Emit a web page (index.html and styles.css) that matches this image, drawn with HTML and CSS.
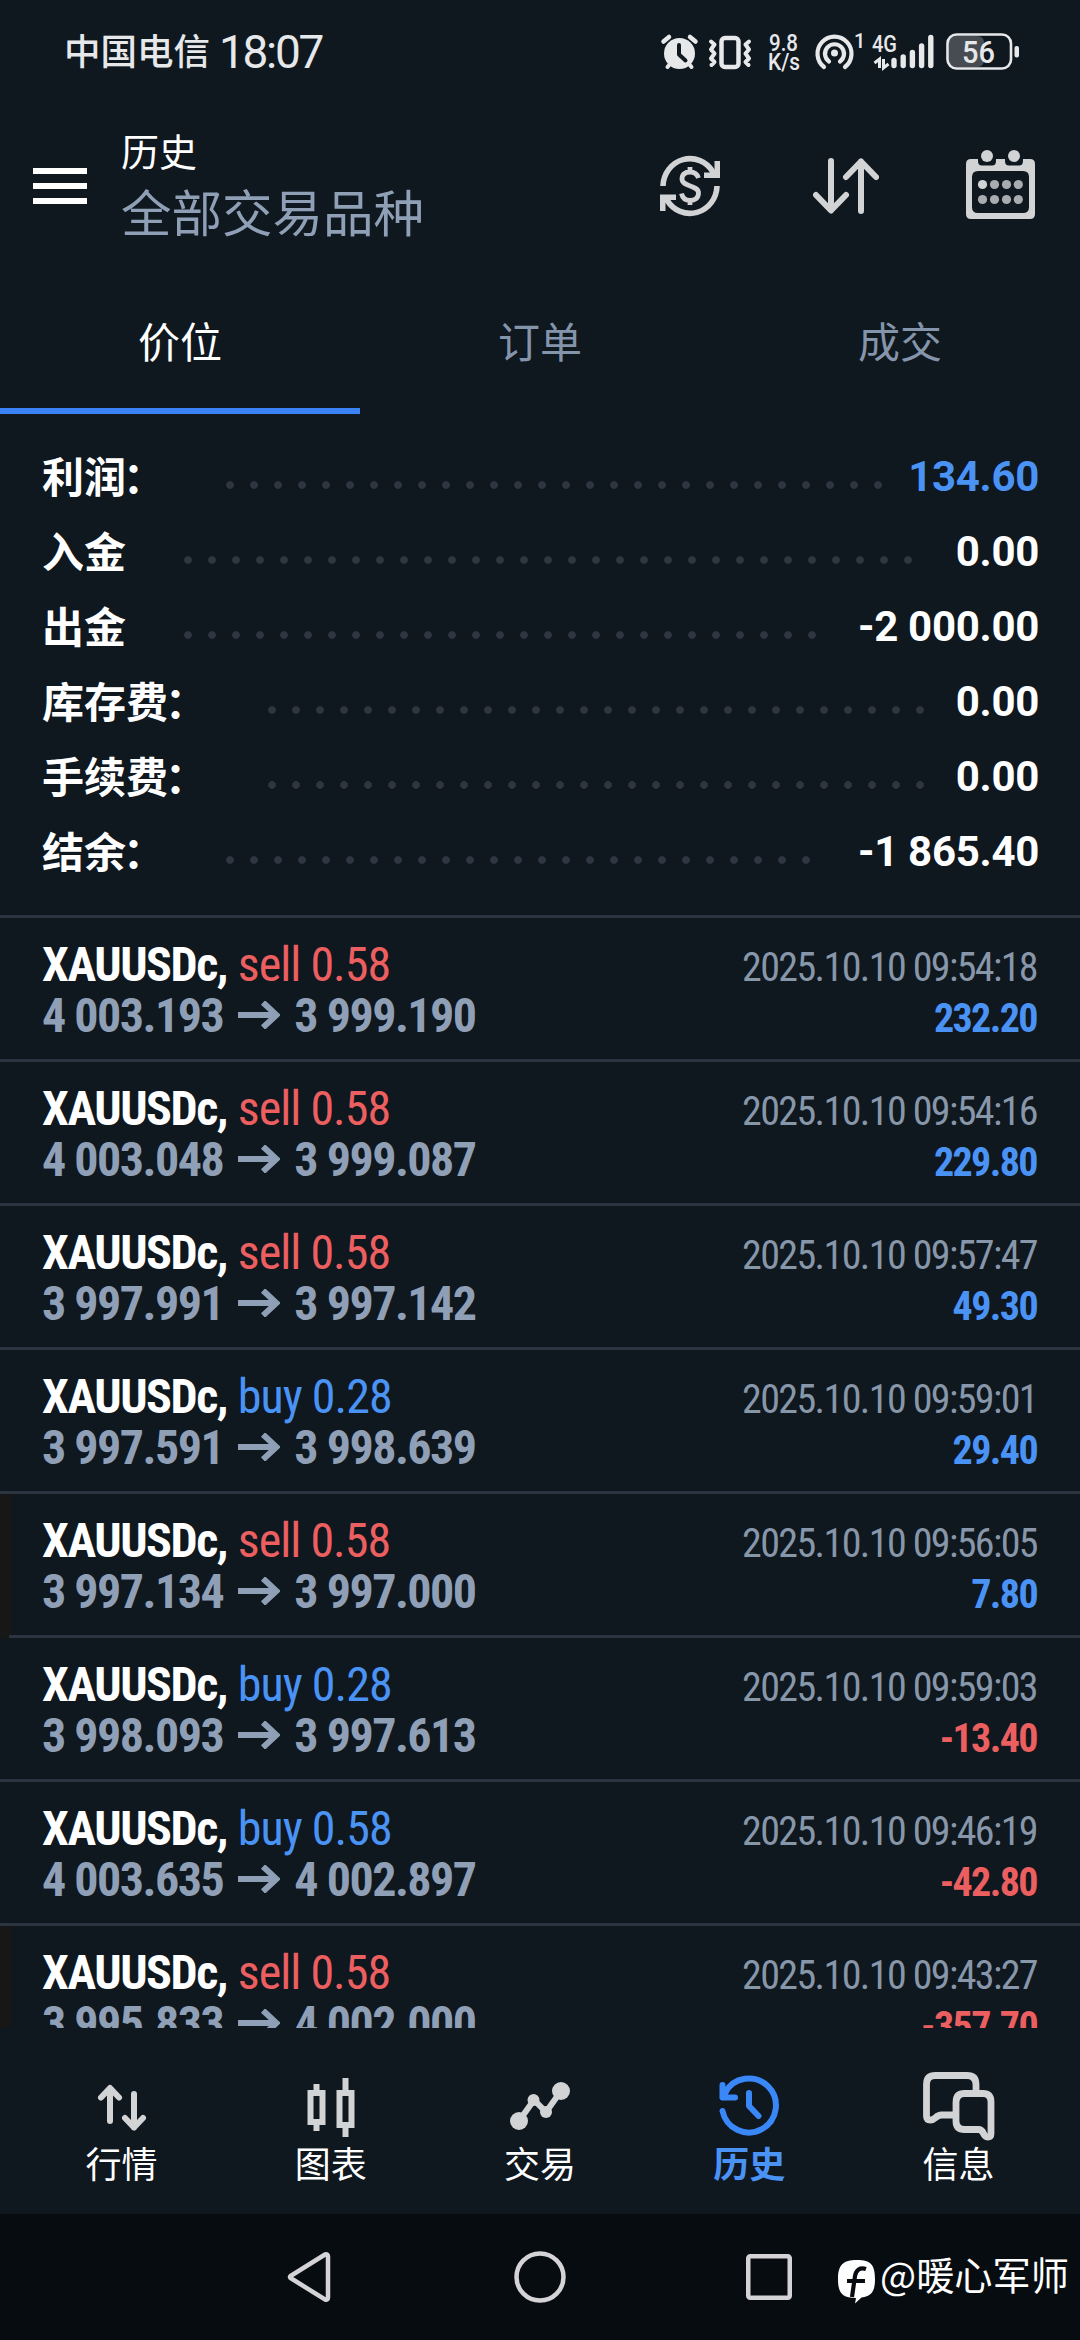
FILE: index.html
```html
<!DOCTYPE html>
<html lang="zh-CN">
<head>
<meta charset="utf-8">
<title>历史</title>
<link rel="stylesheet" href="styles.css">
</head>
<body>
<div class="screen">
  <div class="statusbar">
    <span class="carrier">中国电信</span>
    <span class="clock">18:07</span>
    <svg class="status-icons" viewBox="0 0 362 40" width="362" height="40">
      <g fill="#e6e8ea" stroke="none">
        <circle cx="18.5" cy="22.500" r="15.500"/>
        <path d="M2.500 10.500 8 6M34.500 10.500 29 6" stroke="#e6e8ea" stroke-width="4.500" stroke-linecap="round"/>
        <path d="M9 33 6.500 36M28 33 30.500 36" stroke="#e6e8ea" stroke-width="4" stroke-linecap="round"/>
        <path d="M18 14v9.500l6.500 6" fill="none" stroke="#101820" stroke-width="4" stroke-linecap="round" stroke-linejoin="round"/>
      </g>
      <rect x="60.500" y="7" width="17" height="29" rx="3.500" fill="none" stroke="#e6e8ea" stroke-width="4.500"/>
      <path d="M50 10.500l3.500 3-3.500 5 3.500 4-3.500 5 3.500 3.500-3 3M88 10.500l-3.500 3 3.500 5-3.500 4 3.500 5-3.500 3.500 3 3" fill="none" stroke="#e6e8ea" stroke-width="4" stroke-linecap="round" stroke-linejoin="round"/>
      <text class="net" x="108" y="20" textLength="29" lengthAdjust="spacingAndGlyphs">9.8</text>
      <text class="net" x="107" y="38.500" textLength="32" lengthAdjust="spacingAndGlyphs">K/s</text>
      <g fill="none" stroke="#e6e8ea" stroke-width="4.200" stroke-linecap="round">
        <circle cx="173.500" cy="22" r="3.500" fill="#e6e8ea" stroke="none"/>
        <path d="M168 30.500a9.500 9.500 0 1 1 11 0"/>
        <path d="M163 36a17 17 0 1 1 21 0"/>
      </g>
      <text class="sup" x="193" y="17">1</text>
      <text class="net" x="211" y="21" textLength="25" lengthAdjust="spacingAndGlyphs">4G</text>
      <path d="M218.500 37V28l-5 4M222.500 28v9l5-4" fill="none" stroke="#e6e8ea" stroke-width="3"/>
      <path d="M233 29.500v5M242.200 26v8.500M251.400 21.500v13M260.600 15v19.500M269.800 6.500v28" stroke="#e6e8ea" stroke-width="5.400" stroke-linecap="round"/>
      <rect x="288" y="5" width="35" height="31" rx="6" fill="#474c52"/>
      <rect x="286.500" y="3.500" width="63.500" height="34" rx="9" fill="none" stroke="#e6e8ea" stroke-width="2.600"/>
      <rect x="353.500" y="15" width="4.500" height="11.500" rx="2" fill="#e6e8ea"/>
      <text class="batt" x="301" y="31.500" textLength="33" lengthAdjust="spacingAndGlyphs">56</text>
    </svg>
  </div>

  <header class="header">
    <div class="menu"><i></i><i></i><i></i></div>
    <div class="titles">
      <div class="title">历史</div>
      <div class="subtitle">全部交易品种</div>
    </div>
    <div class="actions">
      <svg width="60" height="62" viewBox="0 0 60 62">
        <path d="M3 31A27 28 0 0 1 53 17M57 31A27 28 0 0 1 7 45" fill="none" stroke="#d2d3d4" stroke-width="5.600"/>
        <path d="M54.500 6H60v17H44v-5.500h6L54.500 15zM5.500 56H0V39.500h16V45h-6L5.500 48z" fill="#d2d3d4"/>
        <path d="M38.500 23Q36.500 17 30 17q-8 0-8 7c0 8 16.500 6 16.500 14 0 5-3.500 7.500-8.500 7.500q-7 0-8.500-7M30 12v5M30 45v5" fill="none" stroke="#d2d3d4" stroke-width="4.800"/>
      </svg>
      <svg width="66" height="56" viewBox="0 0 66 56">
        <path d="M18 3v49M3 37l15 15.500L33 37M48 53V3.500M33 19 48 3.500 63 19" fill="none" stroke="#d2d3d4" stroke-width="6" stroke-linecap="round" stroke-linejoin="round"/>
      </svg>
      <svg class="calendar" width="70" height="70" viewBox="0 0 70 70">
        <path fill-rule="evenodd" fill="#d2d3d4" d="M5 9h7v2q0 4.500 4 4.500h10q4 0 4-4.500V9h9v2q0 4.500 4 4.500h10q4 0 4-4.500V9h7q5 0 5 5v50q0 5-5 5H5q-5 0-5-5V14q0-5 5-5zM12 21q-6 0-6 6v30q0 6 6 6h45q6 0 6-6V27q0-6-6-6z"/>
        <g fill="#d2d3d4"><circle cx="21" cy="6" r="6"/><circle cx="48" cy="6" r="6"/><circle cx="16.500" cy="34.500" r="4.600"/></g>
        <g fill="#a8abaf"><circle cx="28.500" cy="34.500" r="4.600"/><circle cx="40.500" cy="34.500" r="4.600"/><circle cx="52.300" cy="34.500" r="4.600"/><circle cx="16.500" cy="49.500" r="4.600"/><circle cx="28.500" cy="49.500" r="4.600"/><circle cx="40.500" cy="49.500" r="4.600"/><circle cx="52.300" cy="49.500" r="4.600"/></g>
      </svg>
    </div>
  </header>

  <nav class="tabs">
    <div class="tab active">价位</div>
    <div class="tab">订单</div>
    <div class="tab">成交</div>
  </nav>

  <section class="summary">
    <div class="sum"><b>利润<span class="colon">：</span></b><span class="dots" style="width:656px"></span><strong class="blue">134.60</strong></div>
    <div class="sum"><b>入金</b><span class="dots" style="width:728px"></span><strong>0.00</strong></div>
    <div class="sum"><b>出金</b><span class="dots" style="width:632px"></span><strong>-2 000.00</strong></div>
    <div class="sum"><b>库存费<span class="colon">：</span></b><span class="dots" style="width:656px"></span><strong>0.00</strong></div>
    <div class="sum"><b>手续费<span class="colon">：</span></b><span class="dots" style="width:656px"></span><strong>0.00</strong></div>
    <div class="sum"><b>结余<span class="colon">：</span></b><span class="dots" style="width:584px"></span><strong>-1 865.40</strong></div>
  </section>

  <main class="deals">
    <article class="deal"><div class="l"><p class="sym"><b>XAUUSDc,</b> <span class="red">sell 0.58</span></p><p class="price">4 003.193<svg class="arr" viewBox="0 0 42 28"><path d="M0 14h38M25 1.500 38.500 14 25 26.500"/></svg>3 999.190</p></div><div class="r"><p class="date">2025.10.10 09:54:18</p><p class="pl blue">232.20</p></div></article>
    <article class="deal"><div class="l"><p class="sym"><b>XAUUSDc,</b> <span class="red">sell 0.58</span></p><p class="price">4 003.048<svg class="arr" viewBox="0 0 42 28"><path d="M0 14h38M25 1.500 38.500 14 25 26.500"/></svg>3 999.087</p></div><div class="r"><p class="date">2025.10.10 09:54:16</p><p class="pl blue">229.80</p></div></article>
    <article class="deal"><div class="l"><p class="sym"><b>XAUUSDc,</b> <span class="red">sell 0.58</span></p><p class="price">3 997.991<svg class="arr" viewBox="0 0 42 28"><path d="M0 14h38M25 1.500 38.500 14 25 26.500"/></svg>3 997.142</p></div><div class="r"><p class="date">2025.10.10 09:57:47</p><p class="pl blue">49.30</p></div></article>
    <article class="deal"><div class="l"><p class="sym"><b>XAUUSDc,</b> <span class="blue">buy 0.28</span></p><p class="price">3 997.591<svg class="arr" viewBox="0 0 42 28"><path d="M0 14h38M25 1.500 38.500 14 25 26.500"/></svg>3 998.639</p></div><div class="r"><p class="date">2025.10.10 09:59:01</p><p class="pl blue">29.40</p></div></article>
    <article class="deal marked"><div class="l"><p class="sym"><b>XAUUSDc,</b> <span class="red">sell 0.58</span></p><p class="price">3 997.134<svg class="arr" viewBox="0 0 42 28"><path d="M0 14h38M25 1.500 38.500 14 25 26.500"/></svg>3 997.000</p></div><div class="r"><p class="date">2025.10.10 09:56:05</p><p class="pl blue">7.80</p></div></article>
    <article class="deal"><div class="l"><p class="sym"><b>XAUUSDc,</b> <span class="blue">buy 0.28</span></p><p class="price">3 998.093<svg class="arr" viewBox="0 0 42 28"><path d="M0 14h38M25 1.500 38.500 14 25 26.500"/></svg>3 997.613</p></div><div class="r"><p class="date">2025.10.10 09:59:03</p><p class="pl red">-13.40</p></div></article>
    <article class="deal"><div class="l"><p class="sym"><b>XAUUSDc,</b> <span class="blue">buy 0.58</span></p><p class="price">4 003.635<svg class="arr" viewBox="0 0 42 28"><path d="M0 14h38M25 1.500 38.500 14 25 26.500"/></svg>4 002.897</p></div><div class="r"><p class="date">2025.10.10 09:46:19</p><p class="pl red">-42.80</p></div></article>
    <article class="deal marked"><div class="l"><p class="sym"><b>XAUUSDc,</b> <span class="red">sell 0.58</span></p><p class="price">3 995.833<svg class="arr" viewBox="0 0 42 28"><path d="M0 14h38M25 1.500 38.500 14 25 26.500"/></svg>4 002.000</p></div><div class="r"><p class="date">2025.10.10 09:43:27</p><p class="pl red">-357.70</p></div></article>
  </main>

  <nav class="bottom">
    <div class="item"><svg viewBox="0 0 72 72"><path d="M24 51V18.500M15 27.500l9-9.500 9 9.500M48 24v33.500M39 48l9 9.500 9-9.500" fill="none" stroke="#d2d3d4" stroke-width="6" stroke-linecap="round" stroke-linejoin="round"/></svg><span>行情</span></div>
    <div class="item"><svg viewBox="0 0 72 72"><path fill="#d2d3d4" fill-rule="evenodd" d="M18.500 14h6v6h6v35h-6v6h-6v-6h-6V20h6zM18.500 26v23h6V26zM47.500 8h6v12h6v38h-6v9h-6v-9h-6V20h6zM47.500 26v26h6V26z"/></svg><span>图表</span></div>
    <div class="item"><svg viewBox="0 0 72 72"><path d="M15 51 30 30 42 42 57 21" fill="none" stroke="#d2d3d4" stroke-width="6"/><g fill="#d2d3d4"><circle cx="15" cy="51" r="9"/><circle cx="29.500" cy="30" r="6"/><circle cx="42" cy="42" r="6"/><circle cx="57" cy="21" r="9"/></g></svg><span>交易</span></div>
    <div class="item on"><svg viewBox="0 0 72 72"><path d="M9.500 41A27 27 0 1 0 12 23M9.500 15v12.500H22M9.500 27.500 14 20M36 23v13l9.500 10" fill="none" stroke="#3a87f8" stroke-width="6" stroke-linecap="round" stroke-linejoin="round"/></svg><span>历史</span></div>
    <div class="item"><svg viewBox="0 0 72 72"><path d="M54 22V14.500q0-9-9-9H13.500q-9 0-9 9V46q0 4 4 4c5 0 5-5 11-5H33M42.500 23.500H61q8 0 8 8.500v31.500q0 3.500-3.500 3.500c-5 0-3-7.500-9-7.500H42.500q-8.500 0-8.500-8.500V32.500q0-9 8.500-9z" fill="none" stroke="#d2d3d4" stroke-width="6.800"/></svg><span>信息</span></div>
  </nav>

  <footer class="sysnav">
    <svg class="back" width="44" height="52" viewBox="0 0 44 52"><path d="M38 3.500 3.500 25a1.500 1.500 0 0 0 0 2L38 48.500q3 1 3-2v-41q0-3-3-2z" fill="none" stroke="#d4d4d6" stroke-width="4.500"/></svg>
    <svg class="home" width="52" height="52" viewBox="0 0 52 52"><circle cx="26" cy="26" r="23.500" fill="none" stroke="#d4d4d6" stroke-width="4.500"/></svg>
    <svg class="recent" width="46" height="46" viewBox="0 0 46 46"><rect x="2.250" y="2.250" width="41.500" height="41.500" rx="2" fill="none" stroke="#d4d4d6" stroke-width="4.500"/></svg>
    <svg class="logo" width="38" height="44" viewBox="0 0 38 44"><path d="M19 0C33 0 37 5 37 19 37 31 34 36 23.500 37.500L17 43.500 18 38C4 38 0 33 0 19 0 5 5 0 19 0z" fill="#fff"/><path d="M28 9c-6-2-10 1-11 7L14 37M9 21h18" fill="none" stroke="#080c11" stroke-width="4.200"/></svg>
    <span class="watermark">@暖心军师</span>
  </footer>
</div>
</body>
</html>
```

FILE: styles.css
```css
* { box-sizing: border-box; }
body { margin: 0; background: #0f171f; }
p { margin: 0; }
.screen {
  width: 1080px; height: 2340px; overflow: hidden;
  display: flex; flex-direction: column;
  background: #0f171f; color: #fff;
  font-family: Roboto, "Noto Sans CJK SC", sans-serif;
}
.blue { color: #4a93f5; }
.red { color: #ec5f60; }

.statusbar {
  height: 102px; padding: 31px 60px 0 64px;
  display: flex; align-items: flex-start; color: #e6e8ea;
}
.carrier { font: 500 36.500px/38px "Noto Sans CJK SC", sans-serif; width: 155px; white-space: nowrap; }
.clock { font-size: 46px; line-height: 43px; letter-spacing: -2.300px; font-weight: 450; }
.status-icons { margin-left: auto; margin-right: -3px; flex: none; overflow: visible; }
.status-icons text { fill: #e6e8ea; font-weight: 500; }
.net { font-size: 23px; }
.sup { font-size: 20px; }
.batt { font-size: 31px; }

.header { height: 172px; display: flex; padding-left: 33px; }
.menu { width: 54px; padding-top: 66px; display: flex; flex-direction: column; gap: 9px; }
.menu i { height: 6px; background: #fff; }
.titles { margin-left: 34px; padding-top: 22px; font-family: "Noto Sans CJK SC", sans-serif; }
.title { font-size: 38px; line-height: 52px; }
.subtitle { font-size: 50.500px; line-height: 68px; color: #8f9fb5; white-space: nowrap; }
.actions { margin-left: auto; padding: 53px 44px 0 0; display: flex; align-items: flex-start; gap: 93px; }
.actions svg:nth-child(2) { margin-top: 3px; }
.calendar { margin-top: -5px; margin-left: -6px; overflow: visible; }

.tabs { height: 140px; display: flex; }
.tab {
  flex: 1; text-align: center; border-bottom: 6px solid transparent;
  font: 42px/131px "Noto Sans CJK SC", sans-serif; color: #8494aa;
}
.tab.active { color: #fff; border-color: #3a82f5; }

.summary { height: 501px; padding: 25px 41px 0 42px; }
.sum { height: 75px; display: flex; align-items: center; }
.sum b { font: 700 42px/71px "Noto Sans CJK SC", sans-serif; padding-bottom: 4px; }
.colon { margin-left: -3px; padding-right: 3px; }
.sum strong { margin-left: auto; font-size: 42px; font-weight: 700; line-height: 75px; letter-spacing: -0.300px; }
.dots {
  margin-left: 58px; height: 8px; margin-top: 16px;
  background: radial-gradient(circle at 4px 4px, #2f3641 3.400px, transparent 4.200px) 0 0 / 24px 8px repeat-x;
}

.deals { height: 1113px; overflow: hidden; font-family: "Roboto Condensed", Roboto, sans-serif; font-stretch: 75%; }
.deal {
  height: 144px; border-top: 3px solid #2c3440;
  padding: 21px 43px 0 42px; display: flex; justify-content: space-between;
}
.marked { background: linear-gradient(#161716, #161716) 0 0 / 12px 100% no-repeat; }
.marked + .deal { border-image: linear-gradient(90deg, #161716 12px, #2c3440 12px) 3; }
.sym, .price { font-size: 48px; line-height: 51px; white-space: nowrap; letter-spacing: -1.500px; }
.sym b { font-weight: 700; letter-spacing: -1.450px; }
.sym span { margin-left: 1px; letter-spacing: -0.950px; }
.price { color: #8f9fb5; font-weight: 700; }
.arr { width: 42px; height: 28px; margin: 0 14px 0 15px; fill: none; stroke: #8f9fb5; stroke-width: 6; vertical-align: 3px; }
.r { text-align: right; padding-top: 3px; }
.date, .pl { font-size: 40px; line-height: 51px; letter-spacing: -1.600px; }
.date { color: #8796a8; }
.pl { font-weight: 700; }

.bottom { height: 186px; padding: 42px 17px 0; display: flex; }
.item { flex: 1; display: flex; flex-direction: column; align-items: center; }
.item svg { width: 72px; height: 72px; overflow: visible; }
.item span { margin-top: -6px; font: 36px/52px "Noto Sans CJK SC", sans-serif; }
.on span { color: #4a93f5; font-weight: 700; }

.sysnav { height: 126px; background: #070c11; display: flex; align-items: flex-start; padding-left: 287px; }
.back { margin-top: 37px; }
.home { margin: 37px 0 0 183px; }
.recent { margin: 40px 0 0 180px; }
.logo { margin: 46px 0 0 46px; }
.watermark { margin: 33px 0 0 4px; font: 38.200px/54px "Noto Sans CJK SC", sans-serif; white-space: nowrap; }
```
